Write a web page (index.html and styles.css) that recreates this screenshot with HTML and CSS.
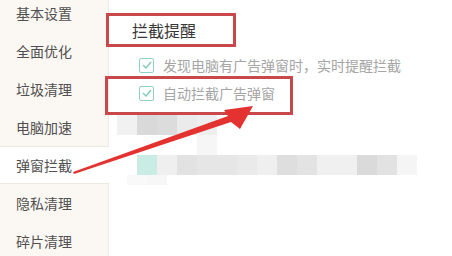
FILE: index.html
```html
<!DOCTYPE html>
<html lang="zh-CN">
<head>
    <meta charset="UTF-8">
    <title>弹窗拦截</title>
    <link rel="stylesheet" href="styles.css">
</head>
<body>
    <div class="page">
        <ul class="menu">
            <li>基本设置</li>
            <li>全面优化</li>
            <li>垃圾清理</li>
            <li>电脑加速</li>
            <li class="active">弹窗拦截</li>
            <li>隐私清理</li>
            <li>碎片清理</li>
        </ul>

        <div class="content">
            <div class="title">拦截提醒</div>
            <div class="options">
                <label class="option">
                    <span class="check"><svg width="10" height="8" viewBox="0 0 10 8"><path d="M1 4 L4 7 L9 1" fill="none" stroke="#7cc9ba" stroke-width="1.3"/></svg></span>
                    发现电脑有广告弹窗时，实时提醒拦截
                </label>
                <label class="option">
                    <span class="check"><svg width="10" height="8" viewBox="0 0 10 8"><path d="M1 4 L4 7 L9 1" fill="none" stroke="#7cc9ba" stroke-width="1.3"/></svg></span>
                    自动拦截广告弹窗
                </label>
            </div>

            <!-- blurred part of the screenshot -->
            <div class="mosaic">
                <div class="m-row">
                    <i style="background:#f1f1f1"></i><i style="background:#d9d9d9"></i><i style="background:#dcdcdc"></i><i style="background:#ebebeb"></i><i style="background:#eeeeee"></i>
                </div>
                <div class="m-row">
                    <i></i><i></i><i></i><i></i><i style="background:#f6f6f6"></i>
                </div>
                <div class="m-row">
                    <i></i><i style="background:#c9ede5"></i><i style="background:#efefef"></i><i style="background:#e2e2e2"></i><i style="background:#e6e6e6"></i><i style="background:#e6e6e6"></i><i style="background:#eaeaea"></i><i style="background:#efefef"></i><i style="background:#dedede"></i><i style="background:#e3e3e3"></i><i style="background:#f0f0f0"></i><i style="background:#f0f0f0"></i><i style="background:#dadada"></i><i style="background:#e2e2e2"></i><i style="background:#f5f5f5"></i>
                </div>
                <div class="m-row short">
                    <i style="background:#f9f9f9"></i><i style="background:#f7f7f7"></i>
                </div>
            </div>
        </div>
    </div>

    <!-- annotations drawn over the screenshot -->
    <div class="mark mark-title"></div>
    <div class="mark mark-option"></div>
    <svg class="arrow" width="452" height="256" viewBox="0 0 452 256">
        <polygon points="73,172 228,116 224,110 253,106 240,129 231,122 74,174" fill="#e3322f"/>
    </svg>
</body>
</html>
```

FILE: styles.css
```css
* {
    box-sizing: border-box;
    margin: 0;
    padding: 0;
}

body {
    font-family: "Microsoft YaHei", "Noto Sans CJK SC", sans-serif;
    background-color: #fff;
    width: 452px;
    height: 256px;
    overflow: hidden;
    position: relative;
}

.page {
    display: flex;
    height: 100%;
}

.menu {
    list-style: none;
    width: 109px;
    flex-shrink: 0;
    margin-top: -6px;
    background-color: #fbf7f3;
    border-right: 1px solid #efe8e2;
}

.menu li {
    height: 38px;
    line-height: 38px;
    padding-left: 16px;
    font-size: 14px;
    color: #505050;
}

.menu li.active {
    background-color: #fff;
    margin-right: -1px;
    border-top: 1px solid #eee8e3;
    border-bottom: 1px solid #eee8e3;
    line-height: 36px;
}

.content {
    flex: 1;
    padding: 19px 0 0 8px;
}

.title {
    margin-left: 15px;
    font-size: 16px;
    line-height: 22px;
    color: #383838;
}

.options {
    margin: 10px 0 0 22px;
}

.option {
    display: flex;
    align-items: center;
    height: 28px;
    font-size: 14px;
    color: #a5a5a5;
}

.check {
    width: 15px;
    height: 15px;
    margin-right: 9px;
    border: 1px solid #8fd2c5;
    border-radius: 2px;
    display: flex;
    align-items: center;
    justify-content: center;
}

.mosaic {
    margin-top: 8px;
}

.m-row {
    display: flex;
    height: 20px;
}

.m-row.short {
    height: 10px;
    margin-left: 10px;
}

.m-row i {
    width: 20px;
    flex-shrink: 0;
}

.mark {
    position: absolute;
    border: 3px solid #c8484c;
}

.mark-title {
    left: 106px;
    top: 13px;
    width: 130px;
    height: 34px;
}

.mark-option {
    left: 105px;
    top: 76px;
    width: 188px;
    height: 39px;
}

.arrow {
    position: absolute;
    left: 0;
    top: 0;
}
```
